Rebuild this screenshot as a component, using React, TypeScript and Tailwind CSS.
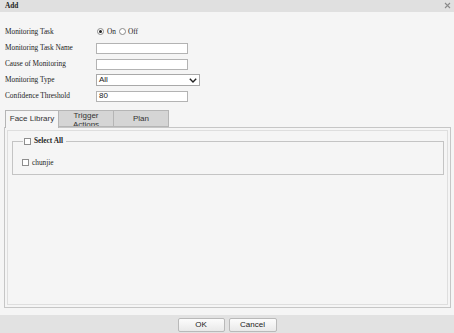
import React from "react"

const labelCls = "w-[91px] shrink-0"

function Box({ checked }: { checked?: boolean }) {
  return (
    <div className="w-[7px] h-[7px] border border-[#8e8e8e] bg-white shrink-0 flex items-center justify-center">
      {checked ? <div className="w-[3px] h-[3px] bg-[#333]" /> : null}
    </div>
  )
}

function Radio({ on }: { on?: boolean }) {
  return (
    <div className="w-[7px] h-[7px] rounded-full border border-[#8a8a8a] bg-white shrink-0 flex items-center justify-center">
      {on ? <div className="w-[3px] h-[3px] rounded-full bg-[#222]" /> : null}
    </div>
  )
}

export default function App() {
  return (
    <div className="w-[454px] h-[333px] bg-[#f5f5f5] flex flex-col font-['Liberation_Serif',serif] text-[#222] overflow-hidden">
      {/* title bar */}
      <div className="h-[12px] bg-[#e0e0e0] flex items-center justify-between pl-[5px] pr-[3px] shrink-0">
        <span className="text-[7.3px] font-bold leading-none">Add</span>
        <svg width="7" height="7" viewBox="0 0 7 7" className="mb-[1px]">
          <path d="M1 1L6 6M6 1L1 6" stroke="#8a8a8a" strokeWidth="1.1" />
        </svg>
      </div>

      {/* body */}
      <div className="flex-1 flex flex-col pt-[12px]">
        <div className="flex flex-col pl-[5px] text-[7.3px] leading-none">
          <div className="h-[16px] flex items-center">
            <span className={labelCls}>Monitoring Task</span>
            <div className="flex items-center pl-[1px]">
              <Radio on />
              <span className="ml-[3px] mr-[3px]">On</span>
              <Radio />
              <span className="ml-[2px]">Off</span>
            </div>
          </div>
          <div className="h-[16px] flex items-center">
            <span className={labelCls}>Monitoring Task Name</span>
            <div className="w-[92px] h-[11px] border border-[#b3b3b3] bg-white" />
          </div>
          <div className="h-[16px] flex items-center">
            <span className={labelCls}>Cause of Monitoring</span>
            <div className="w-[92px] h-[11px] border border-[#b3b3b3] bg-white" />
          </div>
          <div className="h-[16px] flex items-center">
            <span className={labelCls}>Monitoring Type</span>
            <div className="w-[104px] h-[12px] border border-[#a9a9a9] bg-white flex items-center justify-between pl-[2px] pr-[2px] font-['Liberation_Sans',sans-serif] text-[8px]">
              <span>All</span>
              <svg width="8" height="5" viewBox="0 0 8 5">
                <path d="M0.8 0.8L4 4L7.2 0.8" fill="none" stroke="#222" strokeWidth="1.4" />
              </svg>
            </div>
          </div>
          <div className="h-[16px] flex items-center">
            <span className={labelCls}>Confidence Threshold</span>
            <div className="w-[92px] h-[11px] border border-[#b3b3b3] bg-white flex items-center pl-[2px] font-['Liberation_Sans',sans-serif] text-[8px]">
              80
            </div>
          </div>
        </div>

        {/* tabs */}
        <div className="mt-[6px] ml-[4px] w-[447px] flex flex-col">
          <div className="flex pl-[1px] font-['Liberation_Sans',sans-serif] text-[8px] text-[#333] relative z-10">
            <div className="w-[54px] h-[18px] -mb-px border border-b-0 border-[#b5b5b5] bg-[#f5f5f5] flex items-center justify-center pb-[1px]">
              Face Library
            </div>
            <div className="w-[55px] h-[17px] border border-l-0 border-[#b5b5b5] bg-[#d5d5d5] overflow-hidden flex justify-center text-center leading-[9px]">
              <span>
                Trigger
                <br />
                Actions
              </span>
            </div>
            <div className="w-[55px] h-[17px] border border-l-0 border-[#b5b5b5] bg-[#d5d5d5] flex items-center justify-center">
              Plan
            </div>
          </div>
          <div className="h-[181px] border border-[#c6c6c6] p-[2px]">
            <div className="h-full border border-[#dedede] pt-[6px] pl-[4px] pr-[2px]">
              <fieldset className="border border-[#c4c4c4] pl-[9px] pb-[8px] pt-[14px] w-[432px]">
                <legend className="flex items-center ml-[1px] pr-[3px] pl-[1px]">
                  <Box />
                  <span className="ml-[3px] text-[7.3px] font-bold leading-[8px]">Select All</span>
                </legend>
                <div className="flex items-center text-[7.3px] leading-none">
                  <Box />
                  <span className="ml-[3px]">chunjie</span>
                </div>
              </fieldset>
            </div>
          </div>
        </div>
      </div>

      {/* footer */}
      <div className="h-[18px] bg-[#e2e2e2] shrink-0 flex justify-center items-start pt-[3px] gap-[4px] font-['Liberation_Sans',sans-serif] text-[8px] text-[#222]">
        <button className="w-[47px] h-[14px] border border-[#b9b9b9] rounded-[2px] bg-gradient-to-b from-[#fcfcfc] to-[#e9e9e9] leading-none">
          OK
        </button>
        <button className="w-[48px] h-[14px] border border-[#b9b9b9] rounded-[2px] bg-gradient-to-b from-[#fcfcfc] to-[#e9e9e9] leading-none">
          Cancel
        </button>
      </div>
    </div>
  )
}
